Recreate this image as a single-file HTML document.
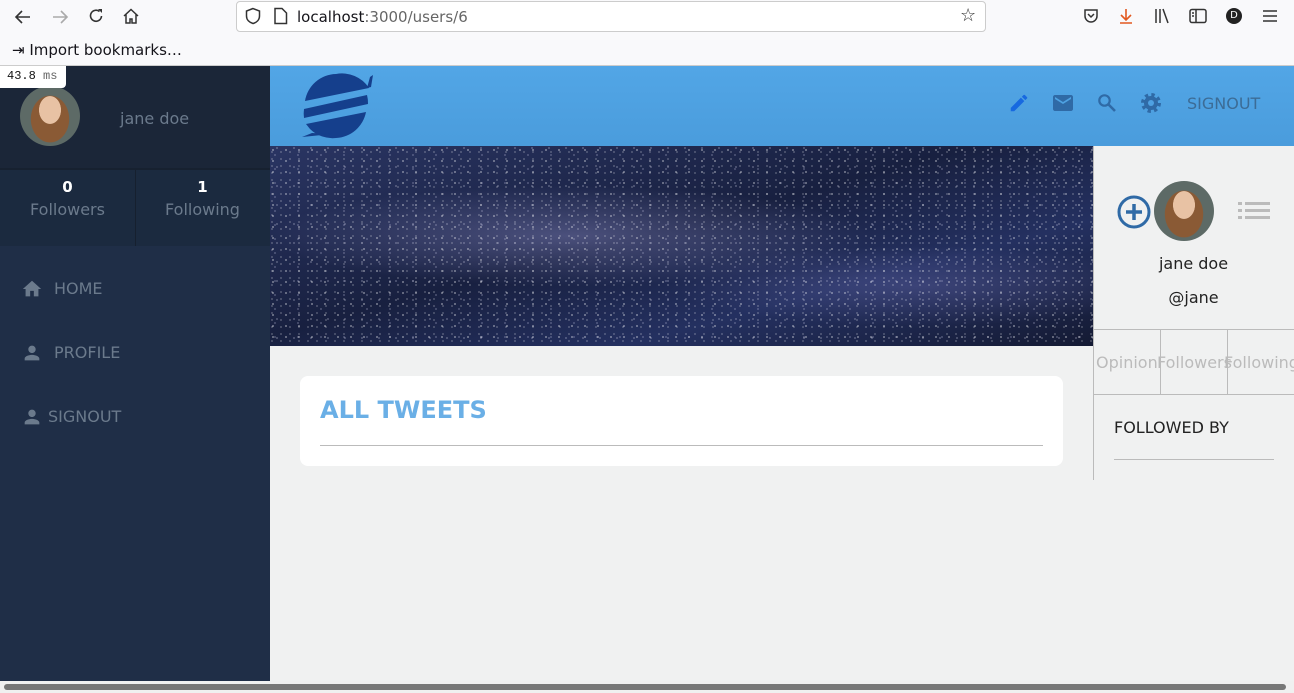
<!DOCTYPE html>
<html><head><style>
*{margin:0;padding:0;box-sizing:border-box}
body{width:1294px;height:693px;overflow:hidden;background:#f0f1f1;font-family:"DejaVu Sans","Liberation Sans",sans-serif;position:relative}
.abs{position:absolute}
.chrome{left:0;top:0;width:1294px;height:66px;background:#f9f9fb;border-bottom:1px solid #ccc}
.url{left:236px;top:1px;width:750px;height:31px;background:#fff;border:1px solid #ccc;border-radius:4px}
.t{font-size:15px;color:#15141a}
.av{border-radius:50%;background:radial-gradient(ellipse 30% 38% at 50% 40%,#e8c2a4 0 60%,transparent 62%),radial-gradient(ellipse 45% 55% at 50% 55%,#8a5a35 0 70%,transparent 72%),#5d6a66;overflow:hidden}
.stars{background:
radial-gradient(circle at 3px 4px,rgba(255,255,255,.7) 0.5px,transparent 1px) 0 0/13px 11px,
radial-gradient(circle at 7px 2px,rgba(220,220,240,.5) 0.5px,transparent 1px) 0 0/17px 19px,
radial-gradient(circle at 5px 9px,rgba(200,200,230,.5) 0.5px,transparent 1px) 0 0/23px 14px,
radial-gradient(circle at 2px 6px,rgba(255,255,255,.4) 0.5px,transparent 1px) 0 0/9px 7px,
radial-gradient(ellipse 300px 50px at 300px 90px,rgba(150,150,210,.4),transparent),
radial-gradient(ellipse 250px 40px at 650px 140px,rgba(120,120,190,.3),transparent),
linear-gradient(165deg,#2a3563,#182040 45%,#243060 70%,#141a33);}
.nav{color:#6b7a8c;font-size:16px}
</style></head><body>
<div class="abs chrome"></div>
<svg class="abs" style="left:14px;top:8px" width="18" height="18" viewBox="0 0 18 18"><path d="M16 9H3M8 3L2 9l6 6" stroke="#333" stroke-width="1.6" fill="none"/></svg>
<svg class="abs" style="left:51px;top:8px" width="18" height="18" viewBox="0 0 18 18"><path d="M2 9h13M10 3l6 6-6 6" stroke="#aaa" stroke-width="1.6" fill="none"/></svg>
<svg class="abs" style="left:87px;top:7px" width="18" height="18" viewBox="0 0 18 18"><path d="M14.5 9A5.5 5.5 0 1 1 12.5 4.5" stroke="#333" stroke-width="1.6" fill="none"/><path d="M11 2h4v4z" fill="#333"/></svg>
<svg class="abs" style="left:122px;top:7px" width="18" height="18" viewBox="0 0 18 18"><path d="M2 9L9 2.5 16 9M4 7.5V16h4v-4h2v4h4V7.5" stroke="#333" stroke-width="1.5" fill="none"/></svg>
<div class="abs url"></div>
<svg class="abs" style="left:244px;top:7px" width="18" height="18" viewBox="0 0 18 18"><path d="M9 1.5L2.5 4v5c0 4 3 6.5 6.5 7.5 3.5-1 6.5-3.5 6.5-7.5V4z" stroke="#333" stroke-width="1.5" fill="none"/></svg>
<svg class="abs" style="left:273px;top:7px" width="16" height="18" viewBox="0 0 16 18"><path d="M2 1.5h7l4.5 4.5v10.5H2z" stroke="#333" stroke-width="1.5" fill="none"/></svg>
<div class="abs t" style="left:297px;top:8px">localhost<span style="color:#666">:3000/users/6</span></div>
<div class="abs" style="left:960px;top:5px;font-size:18px;color:#333">☆</div>
<svg class="abs" style="left:1082px;top:7px" width="18" height="18" viewBox="0 0 18 18"><path d="M3 3h12v6a6 6 0 0 1-12 0z" stroke="#333" stroke-width="1.5" fill="none"/><path d="M6 7l3 3 3-3" stroke="#333" stroke-width="1.5" fill="none"/></svg>
<svg class="abs" style="left:1117px;top:7px" width="18" height="18" viewBox="0 0 18 18"><path d="M9 2v10M4 8l5 5 5-5M3 16h12" stroke="#e25920" stroke-width="1.6" fill="none"/></svg>
<svg class="abs" style="left:1153px;top:7px" width="18" height="18" viewBox="0 0 18 18"><path d="M3 2v14M7 2v14M10 2l5 14" stroke="#333" stroke-width="1.5" fill="none"/></svg>
<svg class="abs" style="left:1189px;top:8px" width="18" height="16" viewBox="0 0 18 16"><rect x="1" y="1.5" width="16" height="13" rx="2" stroke="#333" stroke-width="1.5" fill="none"/><path d="M7 2v12M3 5h2M3 8h2" stroke="#333" stroke-width="1.5"/></svg>
<div class="abs" style="left:1226px;top:8px;width:16px;height:16px;border-radius:50%;background:#222;color:#fff;font-size:10px;text-align:center;line-height:16px">D</div>
<svg class="abs" style="left:1263px;top:9px" width="14" height="14"><path d="M0 2h14M0 7h14M0 12h14" stroke="#333" stroke-width="1.5"/></svg>
<div class="abs" style="left:12px;top:41px;font-size:15px;color:#15141a">⇥ Import bookmarks…</div>

<div class="abs" style="left:0;top:66px;width:270px;height:615px;background:#1f2e47"></div>
<div class="abs" style="left:0;top:66px;width:270px;height:102px;background:#1b2638"></div>
<div class="abs" style="left:0;top:168px;width:270px;height:2px;background:#172130"></div>
<div class="abs" style="left:0;top:170px;width:270px;height:76px;background:#1b2a3f"></div>
<div class="abs" style="left:135px;top:170px;width:1px;height:76px;background:#16202f"></div>
<div class="abs av" style="left:20px;top:86px;width:60px;height:60px"></div>
<div class="abs" style="left:0;top:66px;width:66px;height:22px;background:#fff;border-radius:0 0 4px 0;font-family:'Liberation Mono',monospace;font-size:12px;padding:3px 7px;color:#111">43.8 <span style="color:#666">ms</span></div>
<div class="abs" style="left:120px;top:109px;font-size:16px;color:#6b7a8c">jane doe</div>
<div class="abs" style="left:0;top:178px;width:135px;text-align:center;color:#fff;font-weight:bold;font-size:15px">0</div>
<div class="abs" style="left:0;top:200px;width:135px;text-align:center;color:#6b7a8c;font-size:16px">Followers</div>
<div class="abs" style="left:135px;top:178px;width:135px;text-align:center;color:#fff;font-weight:bold;font-size:15px">1</div>
<div class="abs" style="left:135px;top:200px;width:135px;text-align:center;color:#6b7a8c;font-size:16px">Following</div>
<svg class="abs" style="left:21px;top:278px" width="22" height="22" viewBox="0 0 24 24"><path fill="#6b7a8c" d="M10 20v-6h4v6h5v-8h3L12 3 2 12h3v8z"/></svg>
<div class="abs nav" style="left:54px;top:279px">HOME</div>
<svg class="abs" style="left:21px;top:342px" width="22" height="22" viewBox="0 0 24 24"><path fill="#6b7a8c" d="M12 12c2.21 0 4-1.790 4-4s-1.79-4-4-4-4 1.79-4 4 1.79 4 4 4zm0 2c-2.67 0-8 1.34-8 4v2h16v-2c0-2.660-5.330-4-8-4z"/></svg>
<div class="abs nav" style="left:54px;top:343px">PROFILE</div>
<svg class="abs" style="left:21px;top:406px" width="22" height="22" viewBox="0 0 24 24"><path fill="#6b7a8c" d="M12 12c2.21 0 4-1.79 4-4s-1.79-4-4-4-4 1.79-4 4 1.79 4 4 4zm0 2c-2.67 0-8 1.34-8 4v2h16v-2c0-2.66-5.33-4-8-4z"/></svg>
<div class="abs nav" style="left:48px;top:407px">SIGNOUT</div>

<div class="abs" style="left:270px;top:66px;width:1024px;height:80px;background:linear-gradient(#52a6e6,#4a9cdc)"></div>
<svg class="abs" style="left:300px;top:71px" width="74" height="70" viewBox="0 0 74 70">
<path fill="#153f8c" d="M36 3a32 32 0 0 0-31 27l64-13A32 32 0 0 0 36 3z"/>
<path fill="#153f8c" d="M4 38l63-14a32 32 0 0 1 1 9L4 47a32 32 0 0 1 0-9z"/>
<path fill="#153f8c" d="M6 53l60-12A32 32 0 0 1 36 67a32 32 0 0 1-26-9z"/>
<path fill="#153f8c" d="M70 6l3-2-2 12-4 1z"/>
<path fill="#153f8c" d="M2 66l10-4 20 1z"/>
</svg>
<svg class="abs" style="left:1008px;top:92px" width="22" height="22" viewBox="0 0 24 24"><path fill="#1769e0" d="M3 17.25V21h3.75L17.81 9.94l-3.75-3.75L3 17.25zM20.71 7.04a1 1 0 000-1.41l-2.34-2.34a1 1 0 00-1.41 0l-1.83 1.83 3.75 3.75 1.83-1.830z"/></svg>
<svg class="abs" style="left:1051px;top:91px" width="24" height="24" viewBox="0 0 24 24"><path fill="#2f6aa6" d="M20 4H4c-1.1 0-2 .9-2 2v12c0 1.1.9 2 2 2h16c1.1 0 2-.9 2-2V6c0-1.1-.9-2-2-2zm0 4l-8 5-8-5V6l8 5 8-5v2z"/></svg>
<svg class="abs" style="left:1095px;top:91px" width="24" height="24" viewBox="0 0 24 24"><circle cx="9.5" cy="9.5" r="5.2" fill="none" stroke="#2f6aa6" stroke-width="2.2"/><path d="M13.5 13.5l6.5 6.5" stroke="#2f6aa6" stroke-width="2.6"/></svg>
<svg class="abs" style="left:1139px;top:91px" width="24" height="24" viewBox="0 0 24 24"><circle cx="12" cy="12" r="8" fill="none" stroke="#2f6aa6" stroke-width="4" stroke-dasharray="3.2 3.1"/><circle cx="12" cy="12" r="7" fill="#2f6aa6"/><circle cx="12" cy="12" r="3" fill="#4fa1e2"/></svg>
<div class="abs" style="left:1187px;top:94px;font-size:16px;color:#3c6c96">SIGNOUT</div>

<div class="abs stars" style="left:270px;top:146px;width:823px;height:200px"></div>
<div class="abs" style="left:1093px;top:146px;width:1px;height:334px;background:#bbb"></div>

<div class="abs" style="left:300px;top:376px;width:763px;height:90px;background:#fff;border-radius:8px"></div>
<div class="abs" style="left:320px;top:396px;font-size:24px;font-weight:bold;color:#6aafe6">ALL TWEETS</div>
<div class="abs" style="left:320px;top:445px;width:723px;height:1px;background:#bbb"></div>

<svg class="abs" style="left:1116px;top:194px" width="36" height="36" viewBox="0 0 36 36"><circle cx="18" cy="18" r="15" fill="none" stroke="#2f6aa6" stroke-width="3"/><path d="M18 10v16M10 18h16" stroke="#2f6aa6" stroke-width="3.5"/></svg>
<div class="abs av" style="left:1154px;top:181px;width:60px;height:60px"></div>
<svg class="abs" style="left:1238px;top:202px" width="32" height="18"><g fill="#bbb"><rect x="0" y="0" width="4" height="3"/><rect x="7" y="0" width="25" height="3"/><rect x="0" y="7" width="4" height="3"/><rect x="7" y="7" width="25" height="3"/><rect x="0" y="14" width="4" height="3"/><rect x="7" y="14" width="25" height="3"/></g></svg>
<div class="abs" style="left:1093px;top:254px;width:201px;text-align:center;font-size:16px;color:#222">jane doe</div>
<div class="abs" style="left:1093px;top:288px;width:201px;text-align:center;font-size:16px;color:#222">@jane</div>
<div class="abs" style="left:1093px;top:329px;width:201px;height:1px;background:#bbb"></div>
<div class="abs" style="left:1093px;top:394px;width:201px;height:1px;background:#bbb"></div>
<div class="abs" style="left:1160px;top:329px;width:1px;height:66px;background:#bbb"></div>
<div class="abs" style="left:1227px;top:329px;width:1px;height:66px;background:#bbb"></div>
<div class="abs" style="left:1096px;top:353px;font-size:16px;color:#bbb;white-space:nowrap">Opinion</div>
<div class="abs" style="left:1157px;top:353px;font-size:16px;color:#bbb;white-space:nowrap">Followers</div>
<div class="abs" style="left:1224px;top:353px;font-size:16px;color:#bbb;white-space:nowrap">Following</div>
<div class="abs" style="left:1114px;top:418px;font-size:16px;color:#222">FOLLOWED BY</div>
<div class="abs" style="left:1114px;top:459px;width:160px;height:1px;background:#bbb"></div>

<div class="abs" style="left:0;top:681px;width:1294px;height:12px;background:#f0f0f0"></div>
<div class="abs" style="left:4px;top:684px;width:1282px;height:6px;background:#777;border-radius:3px"></div>
</body></html>
